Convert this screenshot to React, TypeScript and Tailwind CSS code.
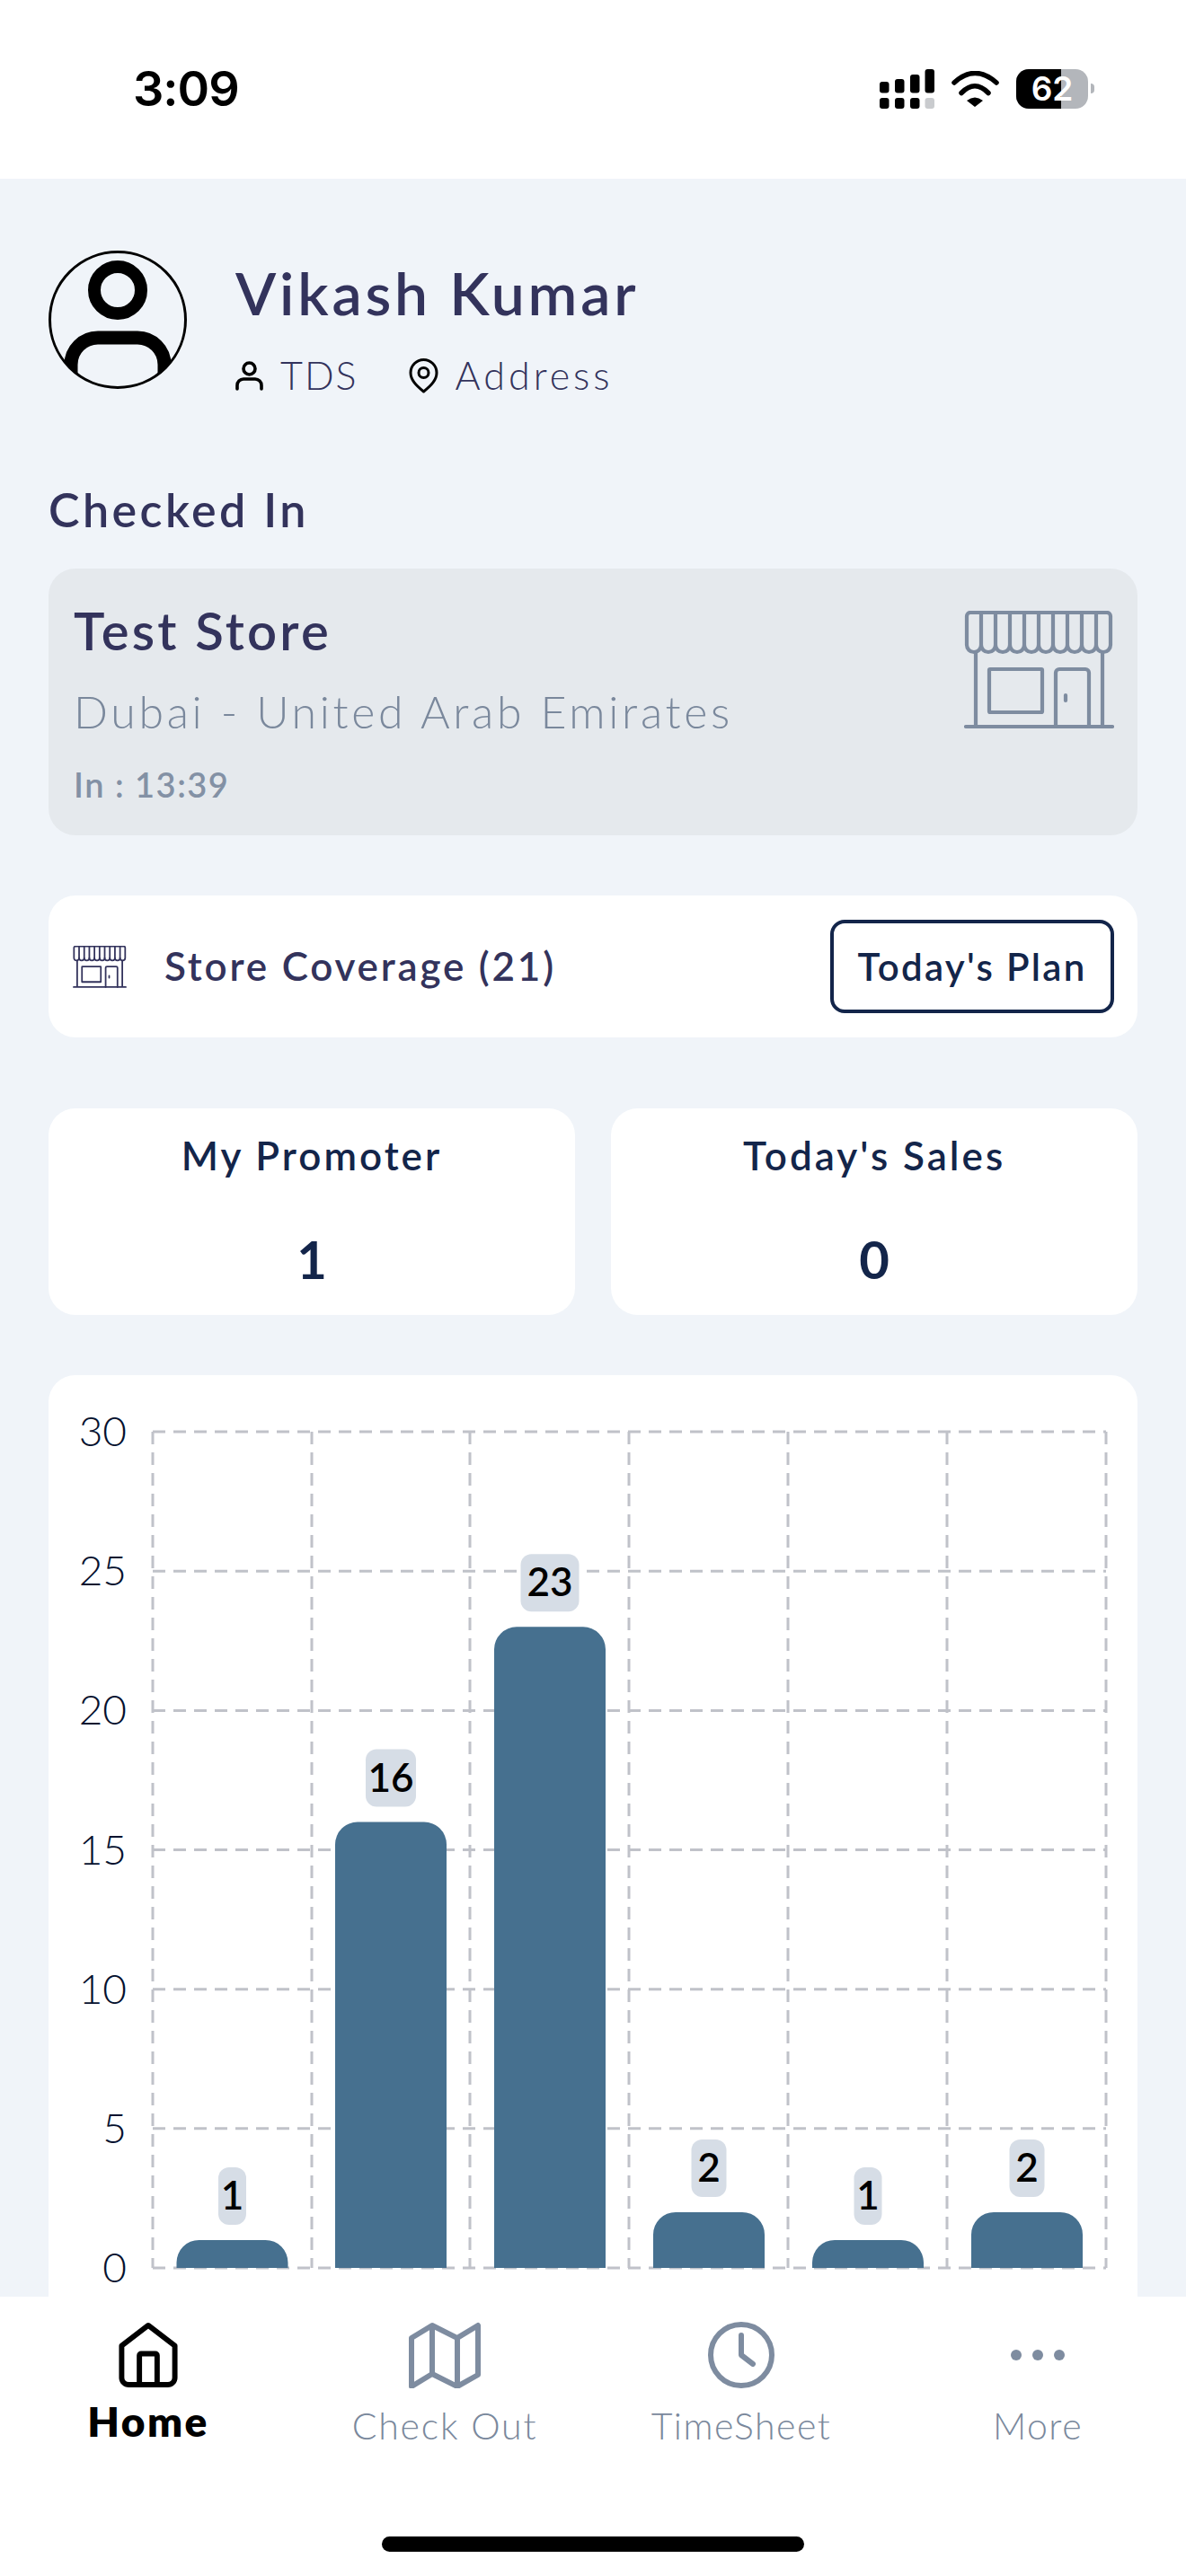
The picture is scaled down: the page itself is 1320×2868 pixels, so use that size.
const font = "font-['Lato',sans-serif]";

const bars = [
  { value: 1, x: 258.5, labelWidth: 31 },
  { value: 16, x: 435, labelWidth: 56 },
  { value: 23, x: 612, labelWidth: 65 },
  { value: 2, x: 789, labelWidth: 39 },
  { value: 1, x: 966, labelWidth: 31 },
  { value: 2, x: 1143, labelWidth: 39 },
];

const gridX = [170, 347, 523, 700, 877, 1054, 1231];
const ticks = [30, 25, 20, 15, 10, 5, 0];
const baseY = 2524;
const unit = 31.03;

function StoreIcon({ className, stroke, strokeWidth }: { className: string; stroke: string; strokeWidth: number }) {
  const columns = [19, 35, 51, 67, 83, 99, 115, 131, 147];
  return (
    <svg viewBox="0 0 167 132" className={className} fill="none" stroke={stroke} strokeWidth={strokeWidth} strokeLinecap="round" strokeLinejoin="round">
      <path d="M3 38V6a4 4 0 0 1 4-4H159a4 4 0 0 1 4 4V38a8 8 0 0 1-16 0a8 8 0 0 1-16 0a8 8 0 0 1-16 0a8 8 0 0 1-16 0a8 8 0 0 1-16 0a8 8 0 0 1-16 0a8 8 0 0 1-16 0a8 8 0 0 1-16 0a8 8 0 0 1-16 0a8 8 0 0 1-16 0" />
      {columns.map((x) => (
        <path key={x} d={`M${x} 2V38`} />
      ))}
      <path d="M13 47V129M154 47V129M2 129H165" />
      <rect x="28" y="65" width="59" height="48" rx="1" />
      <path d="M102 129V69a4 4 0 0 1 4-4h29a4 4 0 0 1 4 4V129M113 94V100" />
    </svg>
  );
}

function Avatar() {
  return (
    <svg viewBox="0 0 154 154" className="w-[154px] h-[154px] shrink-0" fill="none">
      <defs>
        <clipPath id="avatar-clip">
          <circle cx="77" cy="77" r="76" />
        </clipPath>
      </defs>
      <g clipPath="url(#avatar-clip)" stroke="#000">
        <circle cx="77" cy="44" r="26" strokeWidth="14" />
        <path d="M25 160V127a30 30 0 0 1 30-30h44a30 30 0 0 1 30 30V160" strokeWidth="15" />
      </g>
      <circle cx="77" cy="77" r="75.5" stroke="#000" strokeWidth="3" />
    </svg>
  );
}

function StatusBar() {
  return (
    <div className="h-[199px] shrink-0 bg-white flex items-center justify-between pl-[148px] pr-[102px]">
      <span className="font-['Inter',sans-serif] text-[54px] leading-[60px] font-semibold text-black tracking-[-1px] -mt-[2px]">3:09</span>
      <div className="flex items-center gap-[19px] -mt-[2px]">
        <svg viewBox="0 0 61 44" className="w-[61px] h-[44px]" fill="#000">
          <rect x="0" y="14" width="10.5" height="12.5" rx="3" />
          <rect x="17" y="11" width="10.5" height="15.5" rx="3" />
          <rect x="34" y="6" width="10.5" height="20.5" rx="3" />
          <rect x="50.5" y="0" width="10.5" height="26.5" rx="3" />
          <rect x="0" y="32" width="10.5" height="12" rx="3" />
          <rect x="17" y="32" width="10.5" height="12" rx="3" />
          <rect x="34" y="32" width="10.5" height="12" rx="3" />
          <rect x="50.5" y="32" width="10.5" height="12" rx="3" fill="#c9cbce" />
        </svg>
        <svg viewBox="0 0 53 40" className="w-[53px] h-[40px]" fill="none" stroke="#000" strokeWidth="5.5" strokeLinecap="round">
          <path d="M3 13Q26-8 50 13" />
          <path d="M11 24.5Q26 9 41 24.5" />
          <path d="M17 33Q26 26 35 33L26 40Z" fill="#000" stroke="none" />
        </svg>
        <div className="flex items-center gap-[3px]">
          <div className="relative w-[80px] h-[44px] rounded-[14px] overflow-hidden bg-[#b3b6bb]">
            <div className="absolute left-0 top-0 bottom-0 w-[50px] bg-black" />
            <span className="absolute inset-0 flex items-center justify-center font-['Inter',sans-serif] text-[37px] font-semibold leading-none text-white">62</span>
          </div>
          <div className="w-[4px] h-[11px] rounded-r-full bg-[#b3b6bb]" />
        </div>
      </div>
    </div>
  );
}

function ProfileHeader() {
  return (
    <div className="flex gap-[54px] h-[154px]">
      <Avatar />
      <div className="flex flex-col">
        <div className="text-[66px] leading-[70px] font-semibold text-[#33335c] tracking-[3.8px] mt-[12px]">Vikash Kumar</div>
        <div className="flex items-center mt-[32px] text-[#33335c] text-[43px] leading-[50px] font-light">
          <svg viewBox="0 0 31 33" className="w-[31px] h-[33px]" fill="none" stroke="#000" strokeWidth="3.6" strokeLinecap="round">
            <circle cx="15.5" cy="8.5" r="6.5" />
            <path d="M2 31v-4a7 7 0 0 1 7-7h13a7 7 0 0 1 7 7v4" />
          </svg>
          <span className="ml-[19px] tracking-[2px]">TDS</span>
          <svg viewBox="0 0 33 39" className="w-[33px] h-[39px] ml-[56px]" fill="none" stroke="#000" strokeWidth="3">
            <path d="M16.5 37C8 30 2 24 2 16a14.5 14.5 0 0 1 29 0c0 8-6 14-14.5 21Z" strokeLinejoin="round" />
            <circle cx="16.5" cy="16" r="5.5" />
          </svg>
          <span className="ml-[19px] tracking-[4px]">Address</span>
        </div>
      </div>
    </div>
  );
}

function CheckedInCard() {
  return (
    <div className="mt-[36px] h-[297px] rounded-[30px] bg-[#e5e9ed] flex justify-between pl-[28px] pr-[26px]">
      <div className="flex flex-col">
        <div className="mt-[34px] text-[58px] leading-[70px] font-semibold text-[#33335c] tracking-[3.2px]">Test Store</div>
        <div className="mt-[20px] text-[50px] leading-[70px] font-light text-[#7a889c] tracking-[3.7px]">Dubai - United Arab Emirates</div>
        <div className="mt-[26px] text-[38px] leading-[40px] font-semibold text-[#8391a5] tracking-[1.5px]">In : 13:39</div>
      </div>
      <StoreIcon className="w-[167px] h-[132px] mt-[47px]" stroke="#7e8ca0" strokeWidth={4.2} />
    </div>
  );
}

function CoverageCard() {
  return (
    <div className="mt-[67px] h-[158px] rounded-[30px] bg-white flex items-center pl-[27px] pr-[26px]">
      <StoreIcon className="w-[60px] h-[47px]" stroke="#33335c" strokeWidth={5} />
      <div className="ml-[42px] -mt-[3px] text-[44px] leading-[50px] font-semibold text-[#33335c] tracking-[2.8px]">Store Coverage (21)</div>
      <div className="ml-auto w-[316px] h-[104px] rounded-[16px] border-[4px] border-[#13254a] flex items-center justify-center text-[42px] leading-[50px] font-semibold text-[#13254a] tracking-[2.3px]">
        Today's Plan
      </div>
    </div>
  );
}

function StatCard({ title, value }: { title: string; value: number }) {
  return (
    <div className="h-[230px] rounded-[30px] bg-white flex flex-col items-center text-[#13254a]">
      <div className="mt-[22px] text-[44px] leading-[60px] font-semibold tracking-[3px]">{title}</div>
      <div className="mt-[51px] text-[58px] leading-[70px] font-bold">{value}</div>
    </div>
  );
}

function VisitsChart() {
  return (
    <div className="mt-[67px] h-[1100px] rounded-t-[30px] bg-white">
      <svg viewBox="54 1530 1212 1100" className="w-[1212px] h-[1100px]" fill="none">
        <g stroke="#c0c2c9" strokeWidth="3" strokeDasharray="14 9">
          {gridX.map((x) => (
            <path key={x} d={`M${x} 1593V${baseY}`} />
          ))}
          {ticks.map((t) => (
            <path key={t} d={`M170 ${baseY - t * unit}H1231`} />
          ))}
        </g>
        {ticks.map((t) => (
          <text key={t} x="141" y={baseY - t * unit + 16} textAnchor="end" fontSize="46" fontWeight="300" fill="#05112e">
            {t}
          </text>
        ))}
        {bars.map((b) => {
          const top = baseY - b.value * unit;
          return (
            <g key={b.x}>
              <path d={`M${b.x - 62} ${baseY}V${top + 25}a25 25 0 0 1 25-25h74a25 25 0 0 1 25 25V${baseY}Z`} fill="#46708f" />
              <rect x={b.x - b.labelWidth / 2} y={top - 81} width={b.labelWidth} height="64" rx="12" fill="#d6dde6" />
              <text x={b.x} y={top - 34} textAnchor="middle" fontSize="44" fontWeight="600" fill="#000">
                {b.value}
              </text>
            </g>
          );
        })}
      </svg>
    </div>
  );
}

function BottomNav() {
  const grey = "#7e8ca0";
  return (
    <div className="h-[311px] shrink-0 bg-white flex flex-col pt-[28px]">
      <div className="grid grid-cols-4">
        <div className="flex flex-col items-center">
          <svg viewBox="0 0 68 75" className="w-[68px] h-[74px]" fill="none" stroke="#000" strokeWidth="6" strokeLinejoin="round">
            <path d="M34 4 64 27V63a8 8 0 0 1-8 8H12a8 8 0 0 1-8-8V27Z" />
            <path d="M24 71V38a2 2 0 0 1 2-2H42a2 2 0 0 1 2 2V71" />
          </svg>
          <div className="mt-[15px] text-[46px] leading-[44px] font-extrabold text-black tracking-[2.5px]">Home</div>
        </div>
        <div className="flex flex-col items-center">
          <svg viewBox="0 0 82 74" className="w-[82px] h-[74px]" fill="none" stroke={grey} strokeWidth="6" strokeLinejoin="round">
            <path d="M4 18 27 4 55 18 78 4V59L55 72 27 58 4 72Z" />
            <path d="M27 4V58M55 18V72" />
          </svg>
          <div className="mt-[20px] text-[41px] leading-[44px] font-light text-[#7a889c] tracking-[1.8px]">Check Out</div>
        </div>
        <div className="flex flex-col items-center">
          <svg viewBox="0 0 74 74" className="w-[74px] h-[74px]" fill="none" stroke={grey} strokeWidth="6" strokeLinecap="round" strokeLinejoin="round">
            <circle cx="37" cy="37" r="34" />
            <path d="M37 15V37L50 47" />
          </svg>
          <div className="mt-[20px] text-[41px] leading-[44px] font-light text-[#7a889c] tracking-[1.5px]">TimeSheet</div>
        </div>
        <div className="flex flex-col items-center">
          <svg viewBox="0 0 60 74" className="w-[60px] h-[74px]" fill={grey}>
            <circle cx="6" cy="37" r="6" />
            <circle cx="30" cy="37" r="6" />
            <circle cx="54" cy="37" r="6" />
          </svg>
          <div className="mt-[20px] text-[41px] leading-[44px] font-light text-[#7a889c] tracking-[1.5px]">More</div>
        </div>
      </div>
      <div className="mt-[101px] mx-auto w-[470px] h-[17px] rounded-full bg-black" />
    </div>
  );
}

export default function App() {
  return (
    <div className={`${font} w-[1320px] h-[2868px] flex flex-col overflow-hidden bg-white`}>
      <StatusBar />
      <main className="flex-1 min-h-0 overflow-hidden bg-[#f0f4f9] px-[54px] pt-[80px]">
        <ProfileHeader />
        <div className="mt-[104px] text-[52px] leading-[60px] font-semibold text-[#33335c] tracking-[3.4px]">Checked In</div>
        <CheckedInCard />
        <CoverageCard />
        <div className="mt-[79px] grid grid-cols-2 gap-[40px]">
          <StatCard title="My Promoter" value={1} />
          <StatCard title="Today's Sales" value={0} />
        </div>
        <VisitsChart />
      </main>
      <BottomNav />
    </div>
  );
}
